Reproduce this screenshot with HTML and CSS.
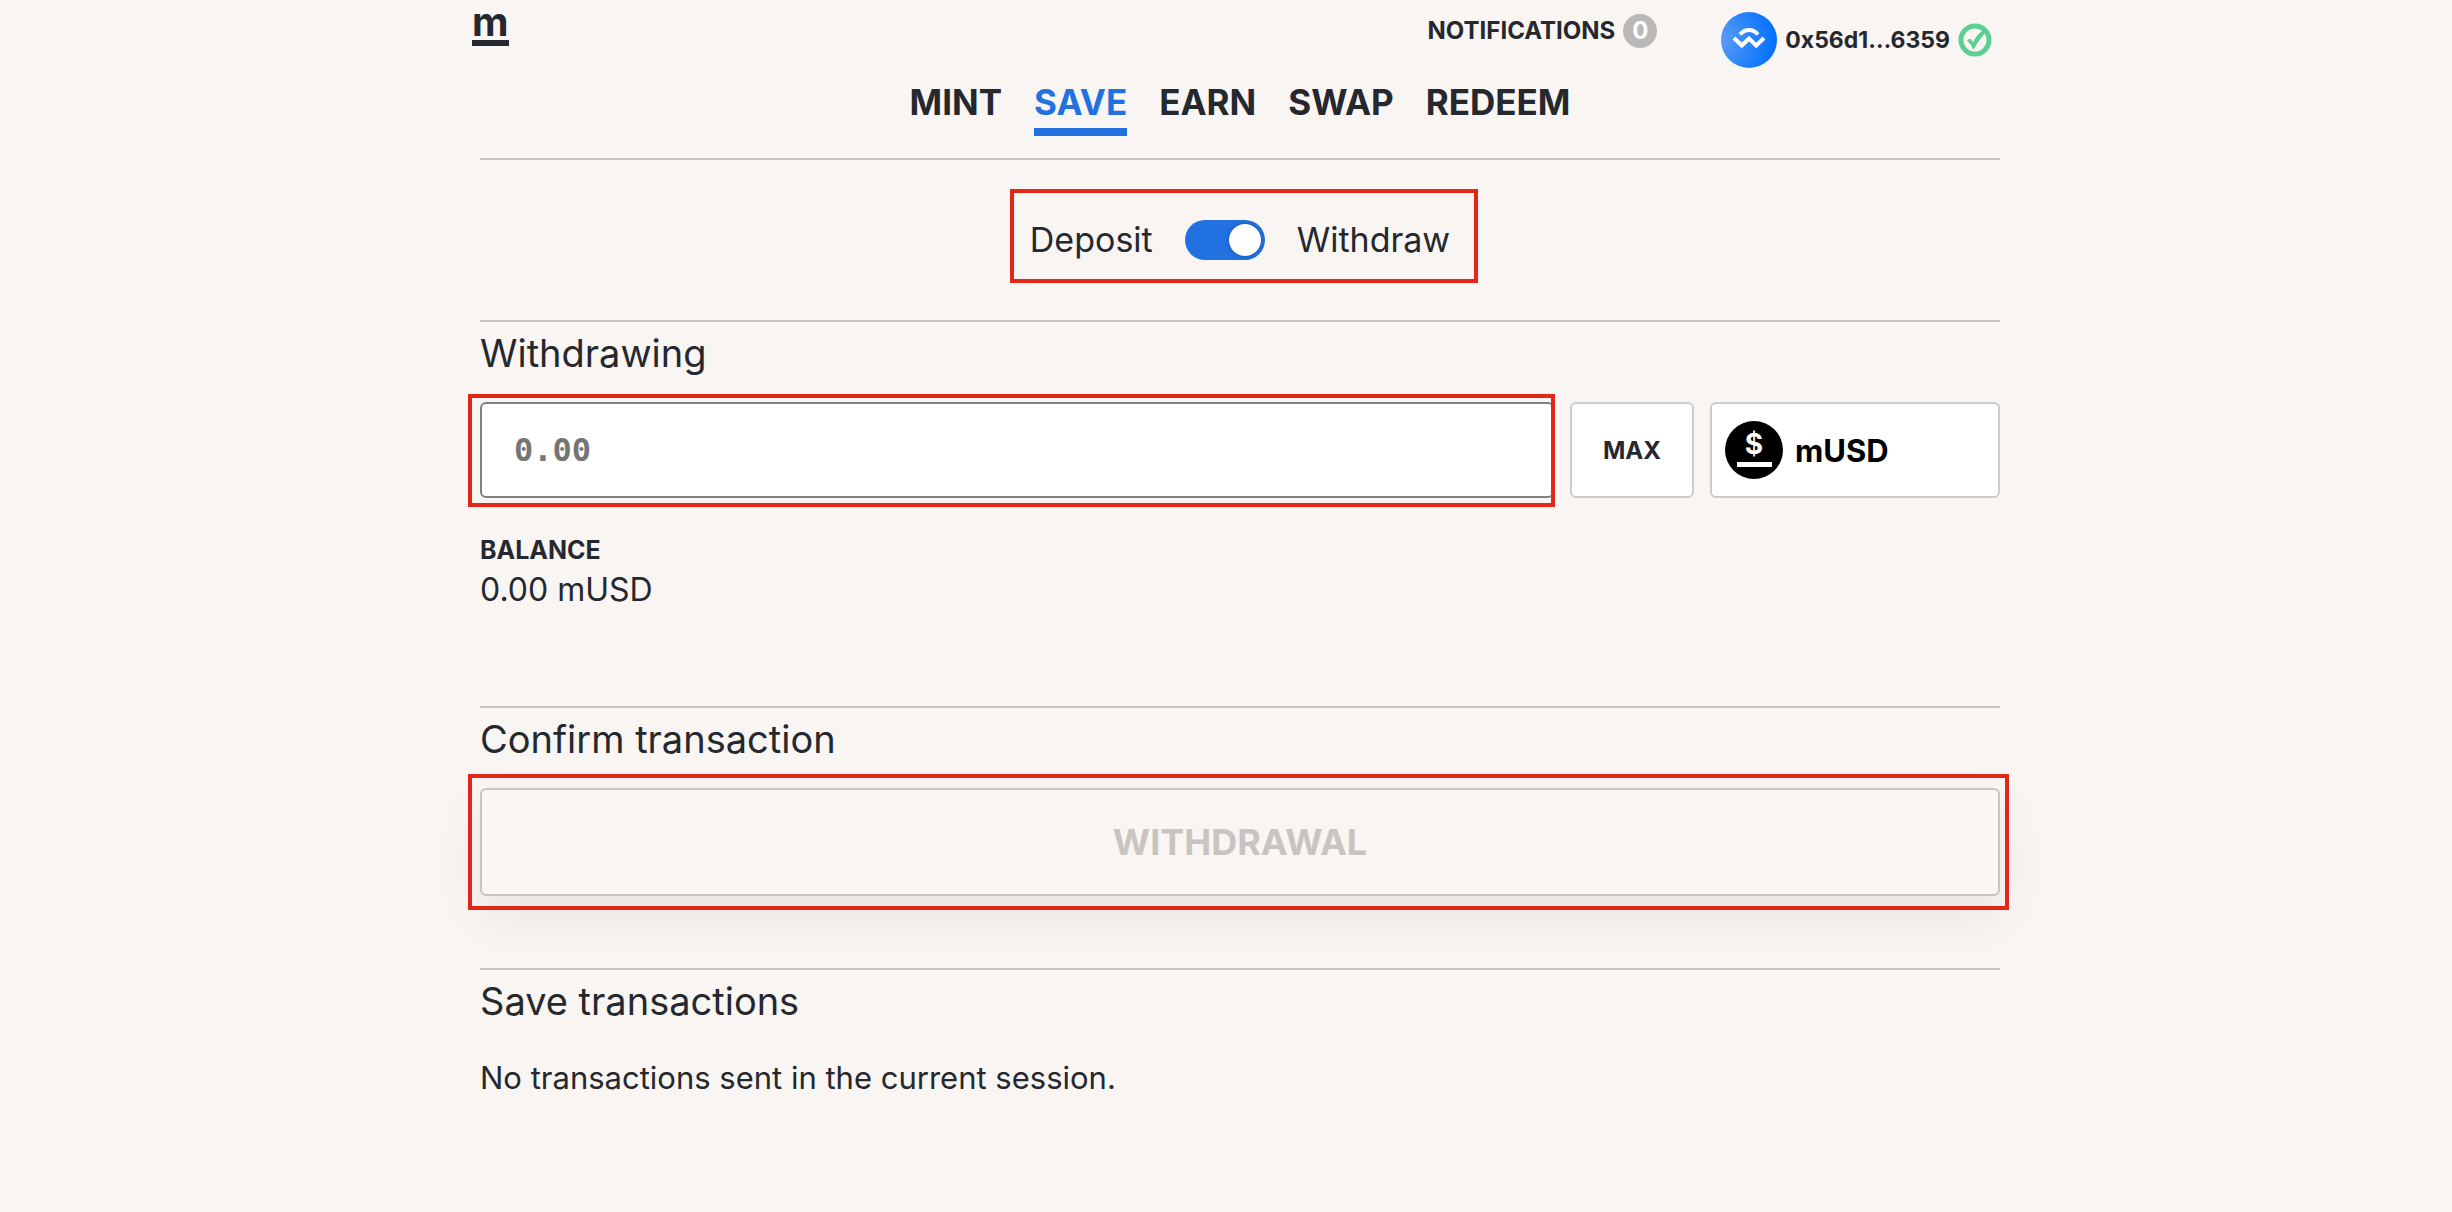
FILE: index.html
```
<!DOCTYPE html>
<html lang="en">
<head>
    <meta charset="UTF-8">
    <meta name="viewport" content="width=device-width, initial-scale=1.0">
    <title>mStable - Save</title>
    <link rel="stylesheet" href="styles.css">
</head>
<body>
    <div class="app">
        <header class="header">
            <a class="logo" href="#" aria-label="mStable">m</a>
            <div class="header-right">
                <button class="notifications" type="button">
                    NOTIFICATIONS <span class="badge">0</span>
                </button>
                <button class="account" type="button">
                    <svg class="wallet-icon" viewBox="0 0 56 56" aria-hidden="true">
                        <defs>
                            <radialGradient id="walletFill" cx="0" cy="0.5" r="1">
                                <stop offset="0" stop-color="#5d9df6"/>
                                <stop offset="1" stop-color="#006fff"/>
                            </radialGradient>
                        </defs>
                        <circle cx="28" cy="28" r="28" fill="url(#walletFill)"/>
                        <path d="M19 22.500C24 16.500 32 16.500 37 22.500" fill="none" stroke="#fff" stroke-width="4"/>
                        <path d="M13 26L20.800 33.500L28 26.500L35.200 33.500L43 26" fill="none" stroke="#fff" stroke-width="4"/>
                    </svg>
                    <span>0x56d1…6359</span>
                    <svg class="check-icon" viewBox="0 0 34 34" aria-hidden="true">
                        <circle cx="17" cy="17" r="14" fill="none" stroke="#5bcf94" stroke-width="5"/>
                        <path d="M9 17.500Q11 15 13.500 16.500L15 19.500Q19 11 25 7.500L28 9.500Q21 16 15.500 27Q13 21 9 17.500Z" fill="#5bcf94"/>
                    </svg>
                </button>
            </div>
        </header>

        <nav class="nav">
            <a href="#">MINT</a>
            <a href="#" class="active" aria-current="page">SAVE</a>
            <a href="#">EARN</a>
            <a href="#">SWAP</a>
            <a href="#">REDEEM</a>
        </nav>

        <main class="content">
            <section class="mode">
                <div class="toggle-row marked marked-toggle">
                    <span>Deposit</span>
                    <input class="toggle" id="mode" type="checkbox" role="switch" aria-label="Deposit or withdraw" checked>
                    <label for="mode">Withdraw</label>
                </div>
            </section>

            <section class="withdrawing">
                <h2><label for="amount">Withdrawing</label></h2>
                <div class="amount-row">
                    <div class="amount-field marked marked-amount">
                        <input class="amount" id="amount" type="text" inputmode="decimal" placeholder="0.00">
                    </div>
                    <button class="max" type="button">MAX</button>
                    <button class="token" type="button">
                        <svg class="token-icon" viewBox="0 0 58 58" aria-hidden="true">
                            <circle cx="29" cy="29" r="29" fill="#000"/>
                            <text class="token-sign" x="29" y="33" text-anchor="middle">$</text>
                            <rect x="12" y="41" width="35" height="5" fill="#fff"/>
                        </svg>
                        <span>mUSD</span>
                    </button>
                </div>
                <h3>BALANCE</h3>
                <p class="balance">0.00 mUSD</p>
            </section>

            <section class="confirm">
                <h2>Confirm transaction</h2>
                <div class="marked marked-submit">
                    <button class="submit" type="submit" disabled>WITHDRAWAL</button>
                </div>
            </section>

            <section class="transactions">
                <h2>Save transactions</h2>
                <p>No transactions sent in the current session.</p>
            </section>
        </main>
    </div>
</body>
</html>
```
FILE: styles.css
```
/* General */
* {
    box-sizing: border-box;
    margin: 0;
    padding: 0;
}

body {
    background-color: #f9f5f2;
    color: #25282e;
    font-family: Inter, "Open Sans", sans-serif;
    font-size: 32px;
    line-height: 48px;
    padding-left: 28px;
}

a {
    color: inherit;
    text-decoration: none;
}

button,
input {
    font-family: inherit;
    color: inherit;
}

button {
    background: none;
    border: none;
    font-weight: bold;
    cursor: pointer;
}

.app {
    max-width: 1536px;
    margin: 0 auto;
}

/* Header */
.header {
    display: flex;
    justify-content: space-between;
    align-items: flex-start;
    height: 76px;
}

.logo {
    height: 46px;
    padding-top: 4px;
    border-bottom: 6px solid #25282e;
    font-size: 40px;
    font-weight: bold;
    line-height: 36px;
}

.header-right {
    display: flex;
    gap: 64px;
    padding: 12px 16px 0 0;
}

.notifications,
.account {
    display: flex;
    align-items: center;
    gap: 8px;
    font-size: 24px;
    line-height: 36px;
}

.notifications {
    height: 38px;
}

.account {
    font-size: 23px;
}

.badge {
    width: 34px;
    height: 34px;
    border-radius: 17px;
    background-color: #bbb9b7;
    color: #fff;
    line-height: 34px;
}

.wallet-icon {
    width: 56px;
    height: 56px;
}

.check-icon {
    width: 34px;
    height: 34px;
}

/* Navigation */
.nav {
    display: flex;
    justify-content: center;
    gap: 32px;
    margin: 0 8px;
    padding-bottom: 22px;
    border-bottom: 2px solid #c8c4c1;
    font-size: 35px;
    font-weight: bold;
    line-height: 52px;
}

.nav a {
    border-bottom: 8px solid transparent;
}

.nav .active {
    color: #2172e0;
    border-color: #2172e0;
}

/* Sections */
.content {
    margin: 0 8px;
}

section {
    border-bottom: 2px solid #c8c4c1;
}

section:last-child {
    border-bottom: none;
}

h2 {
    font-size: 38px;
    font-weight: normal;
    line-height: 62px;
}

h3 {
    font-size: 25px;
    line-height: 36px;
}

/* Red frames around the steps */
.marked {
    position: relative;
}

.marked::after {
    content: "";
    position: absolute;
    border: 4px solid #e22718;
    pointer-events: none;
}

.marked-toggle::after {
    inset: -13px -28px -5px -20px;
}

.marked-amount::after {
    inset: -8px -1px -9px -12px;
}

.marked-submit::after {
    inset: -14px -9px -14px -12px;
}

/* Deposit / withdraw toggle */
.mode {
    display: flex;
    justify-content: center;
    padding: 42px 0;
}

.toggle-row {
    display: flex;
    align-items: center;
    gap: 32px;
    height: 76px;
    font-size: 34px;
}

.toggle {
    appearance: none;
    width: 80px;
    height: 40px;
    padding: 4px;
    border-radius: 20px;
    background-color: #2172e0;
    cursor: pointer;
}

.toggle::before {
    content: "";
    display: block;
    width: 32px;
    height: 32px;
    border-radius: 50%;
    background-color: #fff;
    box-shadow: 0 0 4px rgba(0, 0, 0, 0.3);
}

.toggle:checked::before {
    margin-left: auto;
}

/* Amount */
.withdrawing {
    padding-bottom: 94px;
}

.amount-row {
    display: flex;
    gap: 16px;
    margin: 18px 0 34px;
}

.amount-field {
    flex: 1;
}

.amount,
.max,
.token {
    height: 96px;
    border: 2px solid #cccccc;
    border-radius: 6px;
    background-color: #fff;
}

.amount {
    display: block;
    width: 100%;
    padding: 0 32px;
    border-color: #808080;
    font-family: "DejaVu Sans Mono", monospace;
    font-size: 32px;
    font-weight: bold;
}

.amount::placeholder {
    color: #757575;
}

.max {
    width: 124px;
    font-size: 24px;
}

.token {
    display: flex;
    align-items: center;
    gap: 12px;
    width: 290px;
    padding: 0 13px;
    color: #000;
    font-size: 31px;
}

.token-icon {
    width: 58px;
    height: 58px;
}

.token-sign {
    fill: #fff;
    font-size: 28px;
    font-weight: bold;
}

.balance {
    line-height: 44px;
}

/* Confirm */
.confirm {
    padding-bottom: 72px;
}

.submit {
    display: block;
    width: 100%;
    height: 108px;
    margin-top: 18px;
    border: 2px solid #c8c4c1;
    border-radius: 6px;
    background-color: #f9f5f2;
    color: #c8c4c1;
    font-size: 36px;
    box-shadow: 0 20px 48px rgba(0, 0, 0, 0.07);
}

/* Transactions */
.transactions p {
    margin-top: 22px;
    font-size: 31px;
}
```
